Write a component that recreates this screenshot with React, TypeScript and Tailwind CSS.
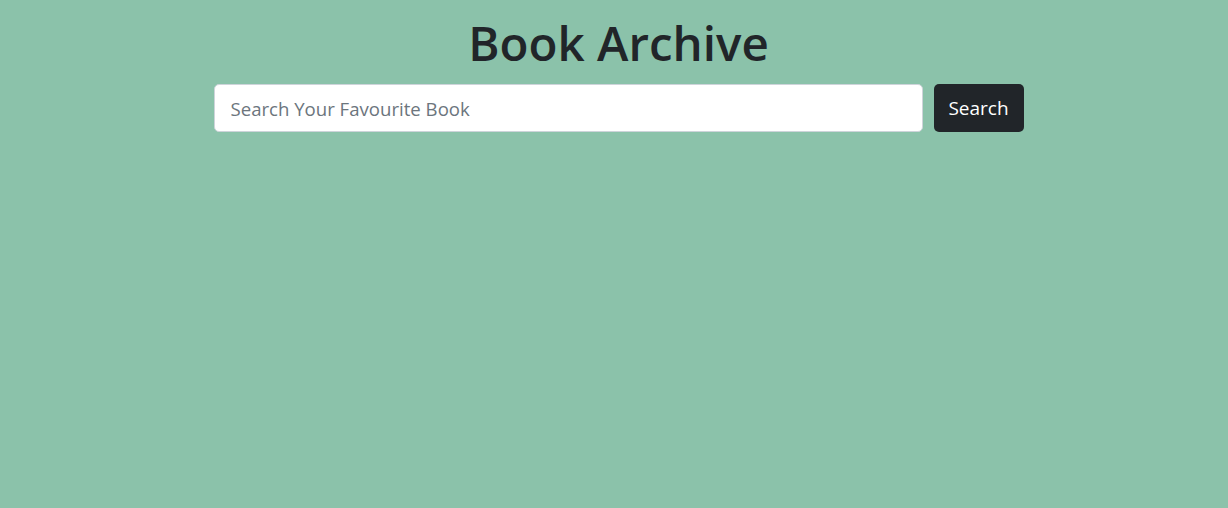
export default function App() {
  return (
    <div
      className="min-h-[508px] w-full bg-[#8bc2aa] pl-[9px]"
      style={{ fontFamily: '"Open Sans", "Noto Sans", sans-serif' }}
    >
      <div className="flex flex-col items-center pt-[13px]">
        <h1 className="text-[47.5px] font-semibold leading-[60px] text-[#212529]">
          Book Archive
        </h1>
        <div className="mt-[11px] flex w-[810px] gap-[11px]">
          <input
            type="text"
            placeholder="Search Your Favourite Book"
            className="h-[48px] flex-1 rounded-[5px] border border-[#ced4da] bg-white px-4 text-[18.6px] text-[#212529] placeholder:text-[#6c757d] outline-none"
          />
          <button className="h-[48px] w-[90px] rounded-[5px] bg-[#212529] text-[19px] text-white">
            Search
          </button>
        </div>
      </div>
    </div>
  );
}
